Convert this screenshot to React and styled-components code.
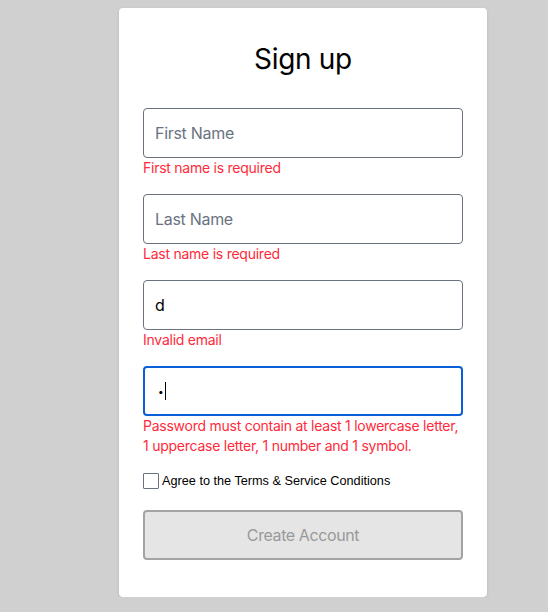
import React from "react";
import styled, { createGlobalStyle } from "styled-components";

const GlobalStyle = createGlobalStyle`
  html, body {
    margin: 0;
    background: #d0d0d0;
  }
  body {
    padding: 8px 0 0 119px;
    font-family: Inter, "Noto Sans", sans-serif;
  }
`;

const fields = [
  { placeholder: "First Name", value: "", error: "First name is required" },
  { placeholder: "Last Name", value: "", error: "Last name is required" },
  { placeholder: "Email", value: "d", error: "Invalid email" },
];

const App = () => {
  return (
    <>
      <GlobalStyle />
      <Card>
        <Title>Sign up</Title>
        <Form onSubmit={(e) => e.preventDefault()}>
          {fields.map((field) => (
            <Field key={field.placeholder}>
              <Input
                placeholder={field.placeholder}
                defaultValue={field.value}
              />
              <Error>{field.error}</Error>
            </Field>
          ))}
          <Field>
            <PasswordBox>
              <Dot>•</Dot>
              <Caret />
            </PasswordBox>
            <Error>
              Password must contain at least 1 lowercase letter, 1 uppercase
              letter, 1 number and 1 symbol.
            </Error>
          </Field>
          <Agree>
            <Box type="checkbox" />
            Agree to the Terms &amp; Service Conditions
          </Agree>
          <Submit type="submit" disabled>
            Create Account
          </Submit>
        </Form>
      </Card>
    </>
  );
};

export default App;

const Card = styled.div`
  width: 368px;
  box-sizing: border-box;
  background: #fff;
  border-radius: 4px;
  box-shadow: 0 1px 3px rgba(0, 0, 0, 0.12);
  padding: 33px 24px 37px;
`;

const Title = styled.h1`
  margin: 0 0 31px;
  text-align: center;
  font-size: 28px;
  line-height: 36px;
  letter-spacing: -0.3px;
  font-weight: 400;
  color: #000;
`;

const Form = styled.form`
  display: flex;
  flex-direction: column;
`;

const Field = styled.div`
  display: flex;
  flex-direction: column;
  margin-bottom: 16px;
`;

const Input = styled.input`
  box-sizing: border-box;
  height: 50px;
  width: 100%;
  border: 1px solid #6b7280;
  border-radius: 4px;
  padding: 0 11px;
  font-family: inherit;
  font-size: 16px;
  letter-spacing: -0.3px;
  color: #000;
  outline: none;

  &::placeholder {
    color: #6b7280;
  }
`;

const PasswordBox = styled.div`
  box-sizing: border-box;
  height: 50px;
  display: flex;
  align-items: center;
  border: 2px solid #0a5fd8;
  border-radius: 4px;
  padding: 0 10px;
`;

const Dot = styled.span`
  font-size: 10px;
  line-height: 1;
  color: #000;
  margin-left: 3px;
`;

const Caret = styled.span`
  width: 1px;
  height: 18px;
  background: #000;
  margin-left: 1px;
`;

const Error = styled.p`
  margin: 0;
  font-size: 14px;
  line-height: 20px;
  letter-spacing: -0.25px;
  color: #ff2a3a;
`;

const Agree = styled.label`
  display: flex;
  align-items: center;
  height: 18px;
  font-family: "Liberation Sans", Arial, sans-serif;
  font-size: 12.7px;
  color: #000;
  margin-bottom: 20px;
`;

const Box = styled.input`
  appearance: none;
  width: 16px;
  height: 16px;
  margin: 0 3px 0 0;
  border: 1px solid #6b7280;
  border-radius: 1px;
  background: #fff;
`;

const Submit = styled.button`
  height: 50px;
  border: 2px solid #a3a3a3;
  border-radius: 4px;
  background: #e5e5e5;
  color: #999;
  font-family: inherit;
  font-size: 16px;
  letter-spacing: -0.4px;
`;
